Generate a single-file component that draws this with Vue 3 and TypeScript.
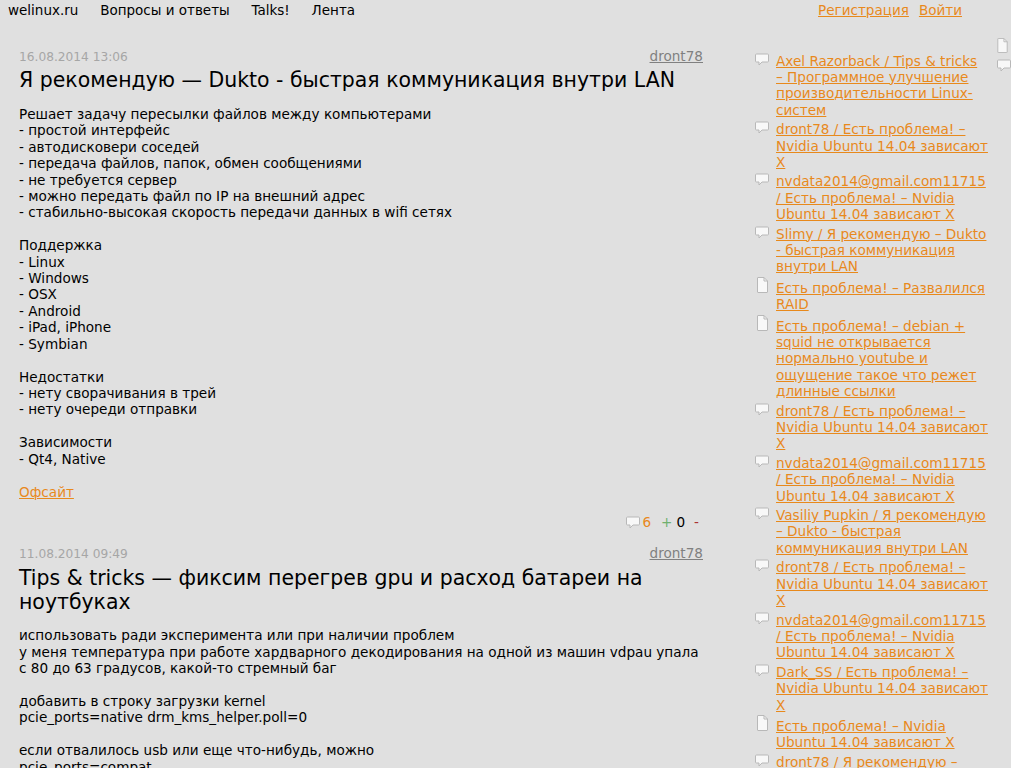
<script setup lang="ts">
interface Post {
  date: string;
  author: string;
  title: string;
  body: string;
  link?: string;
  comments?: number;
}

interface SideItem {
  type: 'comment' | 'doc';
  text: string;
}

const posts: Post[] = [
  {
    date: '16.08.2014 13:06',
    author: 'dront78',
    title: 'Я рекомендую — Dukto - быстрая коммуникация внутри LAN',
    body: `Решает задачу пересылки файлов между компьютерами
- простой интерфейс
- автодисковери соседей
- передача файлов, папок, обмен сообщениями
- не требуется сервер
- можно передать файл по IP на внешний адрес
- стабильно-высокая скорость передачи данных в wifi сетях

Поддержка
- Linux
- Windows
- OSX
- Android
- iPad, iPhone
- Symbian

Недостатки
- нету сворачивания в трей
- нету очереди отправки

Зависимости
- Qt4, Native`,
    link: 'Офсайт',
    comments: 6,
  },
  {
    date: '11.08.2014 09:49',
    author: 'dront78',
    title: 'Tips & tricks — фиксим перегрев gpu и расход батареи на ноутбуках',
    body: `использовать ради эксперимента или при наличии проблем
у меня температура при работе хардварного декодирования на одной из машин vdpau упала
с 80 до 63 градусов, какой-то стремный баг

добавить в строку загрузки kernel
pcie_ports=native drm_kms_helper.poll=0

если отвалилось usb или еще что-нибудь, можно
pcie_ports=compat`,
  },
];

const sideItems: SideItem[] = [
  { type: 'comment', text: 'Axel Razorback / Tips & tricks\n– Программное улучшение производительности Linux-систем' },
  { type: 'comment', text: 'dront78 / Есть проблема! – Nvidia Ubuntu 14.04 зависают X' },
  { type: 'comment', text: 'nvdata2014@gmail.com11715 / Есть проблема! – Nvidia Ubuntu 14.04 зависают X' },
  { type: 'comment', text: 'Slimy / Я рекомендую – Dukto - быстрая коммуникация внутри LAN' },
  { type: 'doc', text: 'Есть проблема! – Развалился RAID' },
  { type: 'doc', text: 'Есть проблема! – debian + squid не открывается нормально youtube и ощущение такое что режет длинные ссылки' },
  { type: 'comment', text: 'dront78 / Есть проблема! – Nvidia Ubuntu 14.04 зависают X' },
  { type: 'comment', text: 'nvdata2014@gmail.com11715 / Есть проблема! – Nvidia Ubuntu 14.04 зависают X' },
  { type: 'comment', text: 'Vasiliy Pupkin / Я рекомендую – Dukto - быстрая коммуникация внутри LAN' },
  { type: 'comment', text: 'dront78 / Есть проблема! – Nvidia Ubuntu 14.04 зависают X' },
  { type: 'comment', text: 'nvdata2014@gmail.com11715 / Есть проблема! – Nvidia Ubuntu 14.04 зависают X' },
  { type: 'comment', text: 'Dark_SS / Есть проблема! – Nvidia Ubuntu 14.04 зависают X' },
  { type: 'doc', text: 'Есть проблема! – Nvidia Ubuntu 14.04 зависают X' },
  { type: 'comment', text: 'dront78 / Я рекомендую – Dukto - быстрая коммуникация внутри LAN' },
];
</script>

<template>
  <div class="page">
    <header class="top">
      <nav class="menu">
        <a>welinux.ru</a>
        <a>Вопросы и ответы</a>
        <a>Talks!</a>
        <a>Лента</a>
      </nav>
      <div class="auth">
        <a class="link">Регистрация</a>
        <a class="link">Войти</a>
      </div>
    </header>

    <div class="columns">
      <main class="posts">
        <article v-for="post in posts" :key="post.title" class="post">
          <div class="meta">
            <span class="date">{{ post.date }}</span>
            <a class="author">{{ post.author }}</a>
          </div>
          <h1 class="title">{{ post.title }}</h1>
          <div class="body">{{ post.body }}</div>
          <p v-if="post.link" class="more"><a class="link">{{ post.link }}</a></p>
          <div v-if="post.comments" class="stats">
            <svg class="bubble" viewBox="0 0 14 13">
              <path d="M1.500 1h11a1 1 0 0 1 1 1v6a1 1 0 0 1-1 1H7l-3 3V9H1.500a1 1 0 0 1-1-1V2a1 1 0 0 1 1-1z" fill="#f8f8f8" stroke="#b8b8b8" />
            </svg>
            <span class="count">{{ post.comments }}</span>
            <span class="plus">+</span>
            <span class="rating">0</span>
            <span class="minus">-</span>
          </div>
        </article>
      </main>

      <aside class="side">
        <div v-for="(item, i) in sideItems" :key="i" class="side-item" :class="item.type">
          <svg v-if="item.type === 'comment'" class="bubble" viewBox="0 0 14 13">
            <path d="M1.500 1h11a1 1 0 0 1 1 1v6a1 1 0 0 1-1 1H7l-3 3V9H1.500a1 1 0 0 1-1-1V2a1 1 0 0 1 1-1z" fill="#f8f8f8" stroke="#b8b8b8" />
          </svg>
          <svg v-else class="doc-icon" viewBox="0 0 11 16">
            <path d="M1 .5h6l3.500 3.500v11a.5.5 0 0 1-.5.5H1a.5.5 0 0 1-.5-.5V1A.5.5 0 0 1 1 .5z" fill="#f8f8f8" stroke="#b8b8b8" />
            <path d="M7 .5V4h3.500" fill="none" stroke="#b8b8b8" />
          </svg>
          <a class="link side-link">{{ item.text }}</a>
        </div>
      </aside>

      <div class="filter">
        <svg class="filter-doc" viewBox="0 0 11 16">
          <path d="M1 .5h6l3.500 3.500v11a.5.5 0 0 1-.5.5H1a.5.5 0 0 1-.5-.5V1A.5.5 0 0 1 1 .5z" fill="#f8f8f8" stroke="#b8b8b8" />
          <path d="M7 .5V4h3.500" fill="none" stroke="#b8b8b8" />
        </svg>
        <svg class="filter-bubble" viewBox="0 0 14 13">
          <path d="M1.500 1h11a1 1 0 0 1 1 1v6a1 1 0 0 1-1 1H7l-3 3V9H1.500a1 1 0 0 1-1-1V2a1 1 0 0 1 1-1z" fill="#f8f8f8" stroke="#b8b8b8" />
        </svg>
      </div>
    </div>
  </div>
</template>

<style>
html,
body {
  background: #fff;
  overflow: hidden;
}
</style>

<style scoped>
.page {
  width: 1011px;
  height: 768px;
  overflow: hidden;
  background: #e0e0e0;
  color: #000;
  font-family: "DejaVu Sans", sans-serif;
  font-size: 13.6px;
  line-height: 16.4px;
}

.top {
  display: flex;
  justify-content: space-between;
  height: 48px;
  padding: 2px 49px 0 8px;
  box-sizing: border-box;
}

.menu {
  display: flex;
  gap: 21.8px;
  font-size: 13.5px;
}

.auth {
  display: flex;
  gap: 10px;
  font-size: 13.55px;
}

.link {
  color: #e8891c;
  text-decoration: underline;
}

.columns {
  display: flex;
  align-items: flex-start;
}

.posts {
  width: 684px;
  margin-left: 19px;
  flex-shrink: 0;
}

.post {
  margin-bottom: 14.6px;
}

.meta {
  display: flex;
  justify-content: space-between;
  align-items: baseline;
}

.date {
  color: #a6a6a6;
  font-size: 12.2px;
}

.author {
  color: #808080;
  text-decoration: underline;
}

.title {
  margin: 3px 0 13.6px;
  font-size: 20.47px;
  font-weight: normal;
  line-height: 24px;
}

.body {
  white-space: pre-line;
}

.more {
  margin: 17px 0 0;
}

.stats {
  display: flex;
  justify-content: flex-end;
  align-items: center;
  margin-top: 14px;
  padding-right: 4px;
}

.stats .bubble {
  width: 14px;
  height: 13px;
  margin-right: 2px;
}

.count {
  color: #e8891c;
  margin-right: 10px;
}

.plus {
  color: #6fb06f;
  margin-right: 4px;
}

.rating {
  margin-right: 9px;
}

.minus {
  color: #a33;
}

.side {
  width: 238px;
  margin: 1.5px 0 0 52px;
  flex-shrink: 0;
}

.side-item {
  display: flex;
  align-items: flex-start;
}

.side-item.comment {
  padding-top: 3px;
}

.side-item.doc {
  padding-top: 5px;
}

.side-item .bubble {
  width: 14px;
  height: 13px;
  flex-shrink: 0;
  margin-right: 7px;
}

.doc-icon {
  width: 11px;
  height: 16px;
  flex-shrink: 0;
  margin: -3px 8px 0 2px;
}

.side-link {
  width: 215px;
  white-space: pre-line;
}

.filter {
  display: flex;
  flex-direction: column;
  gap: 6px;
  margin: -10px 0 0 4px;
}

.filter-doc {
  width: 11px;
  height: 15px;
}

.filter-bubble {
  width: 14px;
  height: 13px;
}
</style>
